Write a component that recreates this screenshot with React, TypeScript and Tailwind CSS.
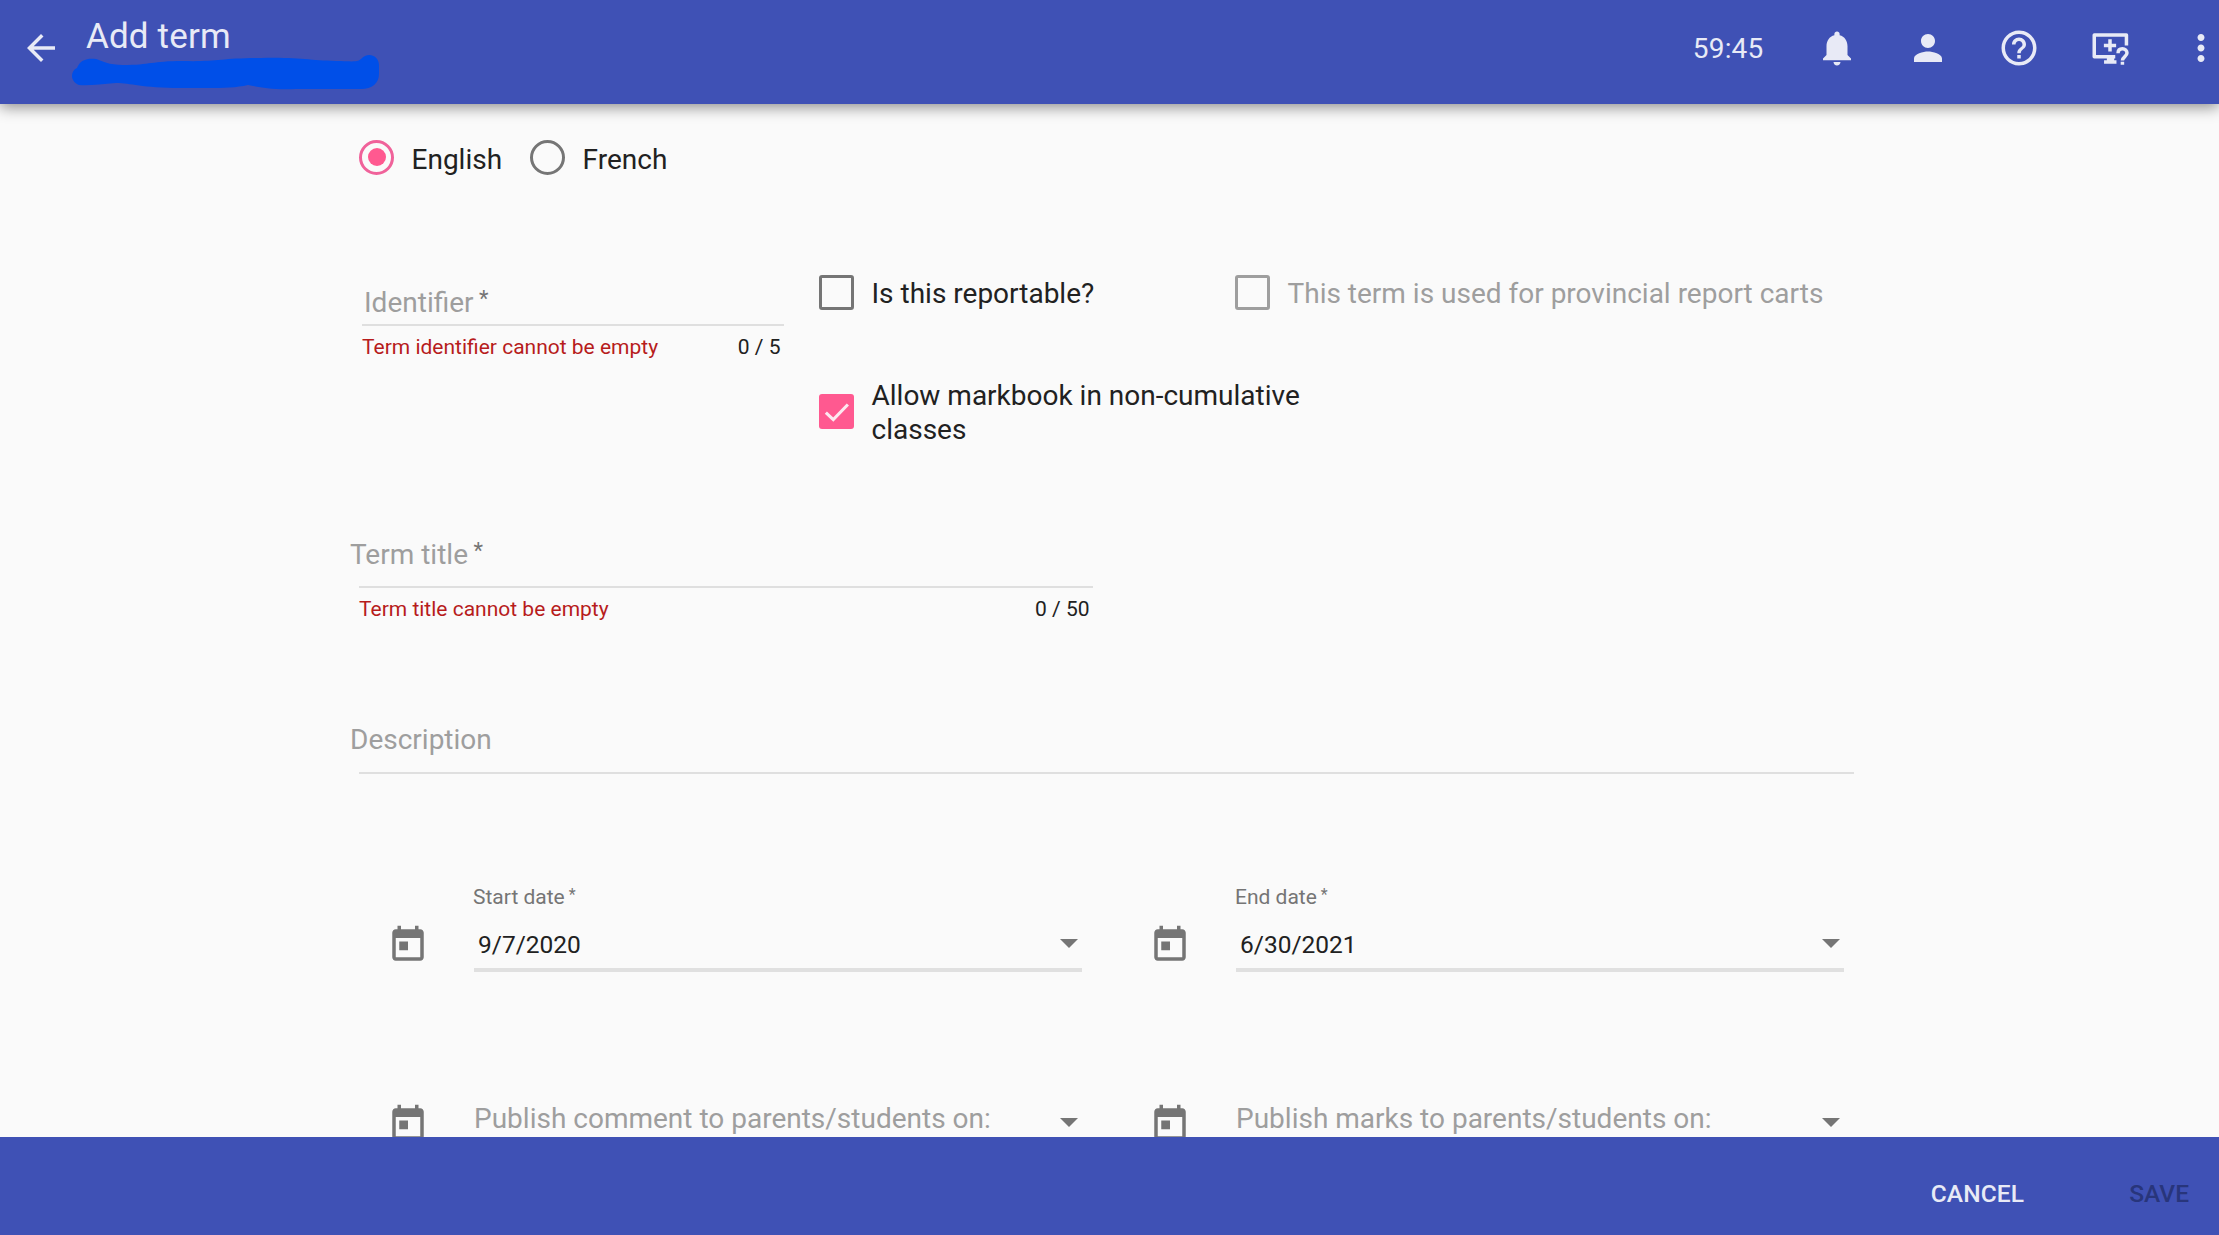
import React from "react";

const PATHS = {
  back: "M20 11H7.83l5.59-5.59L12 4l-8 8 8 8 1.41-1.41L7.83 13H20v-2z",
  bell: "M12 22c1.1 0 2-.9 2-2h-4c0 1.1.89 2 2 2zm6-6v-5c0-3.07-1.64-5.64-4.5-6.32V4c0-.83-.67-1.5-1.5-1.5s-1.5.67-1.5 1.5v.68C7.63 5.36 6 7.92 6 11v5l-2 2v1h16v-1l-2-2z",
  person: "M12 12c2.21 0 4-1.79 4-4s-1.79-4-4-4-4 1.79-4 4 1.79 4 4 4zm0 2c-2.67 0-8 1.34-8 4v2h16v-2c0-2.66-5.33-4-8-4z",
  help: "M11 18h2v-2h-2v2zm1-16C6.48 2 2 6.48 2 12s4.48 10 10 10 10-4.48 10-10S17.52 2 12 2zm0 18c-4.41 0-8-3.59-8-8s3.59-8 8-8 8 3.59 8 8-3.59 8-8 8zm0-14c-2.21 0-4 1.79-4 4h2c0-1.1.9-2 2-2s2 .9 2 2c0 2-3 1.75-3 5h2c0-2.25 3-2.5 3-5 0-2.21-1.79-4-4-4z",
  more: "M12 8c1.1 0 2-.9 2-2s-.9-2-2-2-2 .9-2 2 .9 2 2 2zm0 2c-1.1 0-2 .9-2 2s.9 2 2 2 2-.9 2-2-.9-2-2-2zm0 6c-1.1 0-2 .9-2 2s.9 2 2 2 2-.9 2-2-.9-2-2-2z",
  today: "M19 3h-1V1h-2v2H8V1H6v2H5c-1.11 0-1.99.9-1.99 2L3 19c0 1.1.89 2 2 2h14c1.1 0 2-.9 2-2V5c0-1.1-.9-2-2-2zm0 16H5V8h14v11zM7 10h5v5H7z",
};

function Icon({ name, className = "" }: { name: keyof typeof PATHS; className?: string }) {
  return (
    <svg viewBox="0 0 24 24" fill="currentColor" className={`size-[42px] shrink-0 ${className}`}>
      <path d={PATHS[name]} />
    </svg>
  );
}

function RemoteHelpIcon() {
  return (
    <svg viewBox="0 0 24 24" fill="none" stroke="currentColor" strokeWidth="2" className="size-[42px] shrink-0">
      <path d="M21.4 10.6V4.5H3V17H15" strokeLinejoin="round" />
      <path d="M12 7v7M8.5 10.5h7" />
      <path d="M10.2 17h4.2v2h1.3v2H8.6v-2h1.6z" fill="currentColor" stroke="none" />
      <path d="M16.6 15c0-1.6 1-2.6 2.5-2.6s2.6 1.1 2.6 2.5c0 2-2.6 2-2.6 4.3M19.1 19.8v1.8" />
    </svg>
  );
}

function Radio({ label, checked }: { label: string; checked?: boolean }) {
  return (
    <label className="flex items-center">
      <span
        className={
          checked
            ? "flex size-[35px] items-center justify-center rounded-full border-[3px] border-[#f0629a]"
            : "flex size-[35px] items-center justify-center rounded-full border-[3px] border-[#757575]"
        }
      >
        {checked && <span className="size-[18px] rounded-full bg-[#ff5990]" />}
      </span>
      <span className="ml-[17.5px] pt-[5px] leading-[34px]">{label}</span>
    </label>
  );
}

function Checkbox({ label, state, className = "" }: { label: string; state?: "checked" | "disabled"; className?: string }) {
  return (
    <label className={`flex items-center gap-[17.5px] ${className}`}>
      {state === "checked" ? (
        <span className="flex size-[35px] shrink-0 items-center justify-center rounded-[3px] bg-[#ff5990]">
          <svg viewBox="0 0 24 24" fill="none" stroke="#fde8f0" strokeWidth="2.1" className="size-[35px]">
            <path d="M4.7 12.7 9.8 17.6 19.8 7.2" />
          </svg>
        </span>
      ) : (
        <span
          className={
            state === "disabled"
              ? "size-[35px] shrink-0 rounded-[3px] border-[3px] border-[#9e9e9e]"
              : "size-[35px] shrink-0 rounded-[3px] border-[3px] border-[#757575]"
          }
        />
      )}
      <span className={state === "disabled" ? "mt-[5px] whitespace-nowrap text-[#9e9e9e]" : state === "checked" ? "mt-[2px] -mb-[2px]" : "mt-[5px]"}>
        {label}
      </span>
    </label>
  );
}

function Asterisk() {
  return <span className="ml-[5.5px] inline-block -translate-y-[6px] text-[22px] leading-none text-[#757575]">*</span>;
}

function Hint({ error, count }: { error: string; count: string }) {
  return (
    <div className="mt-[9px] flex justify-between pr-[3.5px] text-[21px] leading-[24px]">
      <span className="text-[#b71c1c]">{error}</span>
      <span>{count}</span>
    </div>
  );
}

function DateField({ label, value, placeholder }: { label?: string; value?: string; placeholder?: string }) {
  return (
    <div className="flex h-[87px] w-[696px]">
      <Icon name="today" className="mt-[39px] text-[#757575]" />
      <div className="ml-[45px] w-[608px] border-b-4 border-[#e0e0e0]">
        <div className="-ml-px h-[24px] text-[21px] leading-[24px] text-[#757575]">
          {label && (
            <>
              {label}
              <span className="ml-[4px] inline-block -translate-y-[4px] text-[16px] leading-none">*</span>
            </>
          )}
        </div>
        <div className="mt-[15px] flex h-[42px] items-center justify-between">
          {value ? (
            <span className="pl-[4px] text-[24.5px]">{value}</span>
          ) : (
            <span className="-mt-[10px] text-[#9e9e9e]">{placeholder}</span>
          )}
          <svg viewBox="0 0 18 9" className="mr-[4.5px] mb-[4px] h-[9px] w-[18px] text-[#757575]" fill="currentColor">
            <path d="M0 0h18L9 9z" />
          </svg>
        </div>
      </div>
    </div>
  );
}

export default function App() {
  return (
    <div className="flex h-[1235px] w-[2219px] flex-col overflow-hidden bg-[#fafafa] font-[Roboto,sans-serif] text-[28px] leading-[34.3px] text-[#212121]">
      <header className="z-10 flex h-[104px] shrink-0 bg-[#3f51b5] text-[#e8eaf6] shadow-[0_3px_14px_rgba(0,0,0,0.45)]">
        <Icon name="back" className="mt-[27px] ml-[20px]" />
        <div className="ml-[24px] pt-[17px]">
          <h1 className="h-[40px] text-[35px] leading-[40px] tracking-[0.15px]">Add term</h1>
          <svg viewBox="0 0 310 38" className="-mt-[3px] -ml-[15px] h-[38px] w-[310px]" fill="#004fe8">
            <path d="M8 31C-1 28-1 17 6 14C9 6 16 4 25 5C31 7 38 11 52 11C80 11 80 7 112 7C145 8 150 4 190 4C230 3 240 7 270 7C287 8 287 7 290 5C297-3 308 2 308 11V20C308 29 301 35 290 35H225C200 36 187 33 177 31C160 35 140 34 110 34C70 34 60 29 45 29C30 30 18 32 8 31Z" />
          </svg>
        </div>
        <div className="ml-auto -mr-[3px] flex h-[96px] items-center gap-[49px]">
          <span className="mt-[2px] mr-[3.5px] tracking-[0.2px]">59:45</span>
          <Icon name="bell" />
          <Icon name="person" />
          <Icon name="help" />
          <RemoteHelpIcon />
          <Icon name="more" />
        </div>
      </header>

      <main className="h-[1033px] shrink-0 overflow-hidden pt-[35px] pl-[359px]">
        <div className="flex h-[36px] gap-[28px]">
          <Radio label="English" checked />
          <Radio label="French" />
        </div>

        <section className="mt-[99px] flex h-[261px] pl-[3px]">
          <div className="w-[422px] pt-[9px]">
            <div className="h-[43px] border-b-2 border-[#dfdfdf] pl-[2px] leading-[40px] text-[#9e9e9e]">
              Identifier
              <Asterisk />
            </div>
            <Hint error="Term identifier cannot be empty" count="0 / 5" />
          </div>
          <div className="ml-[35px] grid auto-rows-min grid-cols-[416px_600px] gap-y-[67px]">
            <Checkbox label="Is this reportable?" className="h-[36px]" />
            <Checkbox label="This term is used for provincial report carts" state="disabled" className="h-[36px]" />
            <Checkbox
              label="Allow markbook in non-cumulative classes"
              state="checked"
              className="col-span-2 w-[500px]"
            />
          </div>
        </section>

        <section className="w-[734px]">
          <div className="-ml-[9px] h-[51px] leading-[40px] text-[#9e9e9e]">
            Term title
            <Asterisk />
          </div>
          <div className="h-[2px] bg-[#dfdfdf]" />
          <Hint error="Term title cannot be empty" count="0 / 50" />
        </section>

        <section className="mt-[99px] w-[1495px]">
          <div className="-ml-[9px] h-[52px] leading-[40px] text-[#9e9e9e]">Description</div>
          <div className="h-[2px] bg-[#dfdfdf]" />
        </section>

        <section className="mt-[111px] ml-[28px] grid grid-cols-[762px_762px] gap-y-[92px]">
          <DateField label="Start date" value="9/7/2020" />
          <DateField label="End date" value="6/30/2021" />
          <DateField placeholder="Publish comment to parents/students on:" />
          <DateField placeholder="Publish marks to parents/students on:" />
        </section>
      </main>

      <footer className="z-10 flex h-[98px] shrink-0 items-center justify-end bg-[#3f51b5] pt-[16px] pr-[30px] text-[24.5px] font-medium">
        <button className="tracking-[0.15px] text-[#e8eaf6]">CANCEL</button>
        <button className="ml-[105px] text-[#28357b]">SAVE</button>
      </footer>
    </div>
  );
}
